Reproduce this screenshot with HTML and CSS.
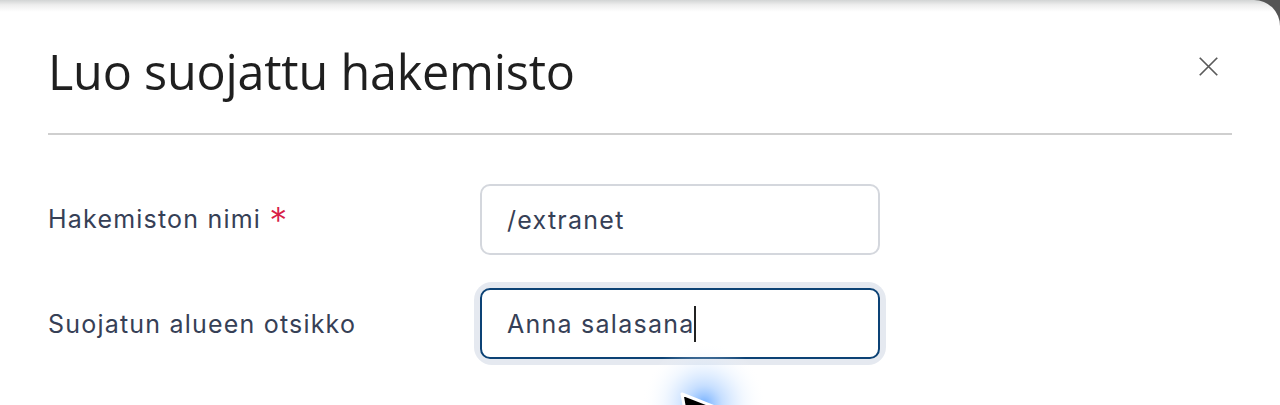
FILE: index.html
```html
<!DOCTYPE html>
<html lang="fi">
<head>
<meta charset="utf-8">
<title>Luo suojattu hakemisto</title>
<link rel="stylesheet" href="styles.css">
</head>
<body>
<div class="modal">
  <header class="modal-header">
    <h1 class="modal-title">Luo suojattu hakemisto</h1>
    <button class="close-btn" aria-label="Sulje">
      <svg width="24" height="24" viewBox="0 0 24 24"><path d="M2 2 L22 22 M22 2 L2 22" stroke="#5a5a5a" stroke-width="2" fill="none"/></svg>
    </button>
  </header>
  <div class="divider"></div>
  <form class="form">
    <div class="row">
      <label class="label">Hakemiston nimi <span class="req">*</span></label>
      <div class="field"><div class="input">/extranet</div></div>
    </div>
    <div class="row">
      <label class="label">Suojatun alueen otsikko</label>
      <div class="field focused"><div class="input">Anna salasana<span class="caret"></span></div></div>
    </div>
  </form>
  <div class="pointer">
    <svg width="140" height="100" viewBox="0 0 140 100">
      <defs>
        <radialGradient id="glow" cx="50%" cy="50%" r="50%">
          <stop offset="0%" stop-color="#4f9bff" stop-opacity="0.8"/>
          <stop offset="30%" stop-color="#8fbfff" stop-opacity="0.5"/>
          <stop offset="65%" stop-color="#d6e8ff" stop-opacity="0.3"/>
          <stop offset="100%" stop-color="#ffffff" stop-opacity="0"/>
        </radialGradient>
      </defs>
      <circle cx="72" cy="62" r="62" fill="url(#glow)"/>
      <path d="M50 52 L88 67 L74 71 L80 85 L72 89 L66 75 L56 85 Z" fill="#000" stroke="#fff" stroke-width="3" stroke-linejoin="round"/>
    </svg>
  </div>
</div>
</body>
</html>
```

FILE: styles.css
```css
html, body {
  margin: 0;
  padding: 0;
  background: #555555;
}
body {
  width: 1280px;
  height: 405px;
  overflow: hidden;
}
.modal {
  position: relative;
  width: 1280px;
  height: 405px;
  background: linear-gradient(to bottom, #d2d4d4 0px, #eeeeee 5px, #ffffff 12px);
  border-top-right-radius: 26px;
  padding: 0 48px;
  box-sizing: border-box;
  overflow: hidden;
}
.modal-header {
  display: flex;
  align-items: center;
  justify-content: space-between;
  height: 133px;
}
.modal-title {
  margin: 0;
  font-family: "Open Sans", "Noto Sans", sans-serif;
  font-weight: 400;
  font-size: 48.5px;
  color: #1f1f1f;
  letter-spacing: -0.2px;
  padding-top: 8px;
}
.close-btn {
  width: 40px;
  height: 40px;
  margin-right: 4px;
  padding: 0;
  border: 0;
  background: transparent;
  display: flex;
  align-items: center;
  justify-content: center;
}
.close-btn svg {
  width: 21px;
  height: 21px;
}
.divider {
  height: 2px;
  background: #cfcfcf;
}
.form {
  display: flex;
  flex-direction: column;
  gap: 33px;
  padding-top: 49px;
}
.row {
  display: grid;
  grid-template-columns: 432px 400px;
  align-items: center;
}
.label {
  font-family: "Inter", "Lato", sans-serif;
  font-size: 25px;
  color: #364056;
  letter-spacing: 1.2px;
}
.req {
  color: #d81e48;
  font-size: 36px;
  font-weight: 300;
  margin-left: 0;
  vertical-align: -5px;
  line-height: 1;
}
.field {
  border-radius: 12px;
}
.input {
  box-sizing: border-box;
  height: 71px;
  border: 2px solid #d4d7dd;
  border-radius: 10px;
  background: #fff;
  padding: 0 25px;
  display: flex;
  align-items: center;
  font-family: "Inter", "Lato", sans-serif;
  font-size: 25px;
  color: #364056;
  letter-spacing: 1.25px;
}
.field.focused {
  box-shadow: 0 0 0 6px #e5e9f0;
}
.field.focused .input {
  border-color: #0c4275;
}
.caret {
  display: inline-block;
  width: 2px;
  height: 36px;
  background: #222;
  margin-left: 0;
}
.pointer {
  position: absolute;
  left: 632px;
  top: 342px;
}
```
